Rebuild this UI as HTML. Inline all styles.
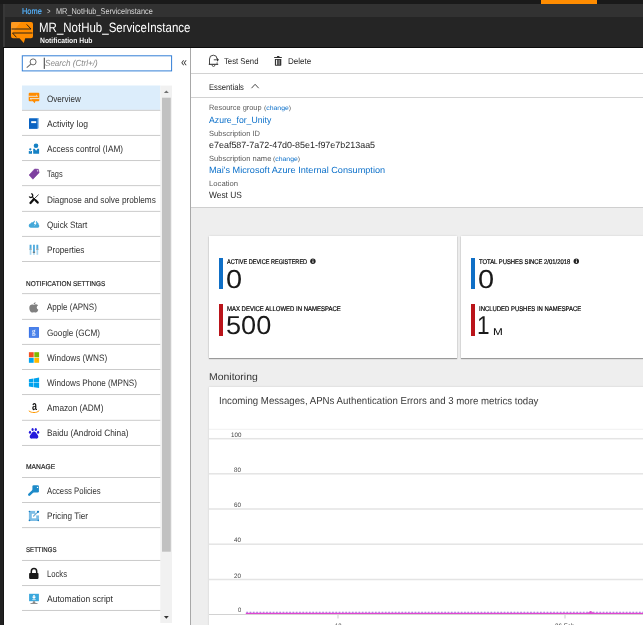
<!DOCTYPE html>
<html><head><meta charset="utf-8"><title>MR_NotHub_ServiceInstance - Notification Hub</title>
<style>
html,body{margin:0;padding:0;}
body{width:643px;height:625px;overflow:hidden;position:relative;background:#fff;font-family:"Liberation Sans",Arial,sans-serif;}
.t{position:absolute;white-space:pre;transform-origin:0 0;}
.b{position:absolute;}
.hl{position:absolute;left:22px;width:138px;height:1px;background:#d4d4d4;}
svg{position:absolute;overflow:visible;}
</style></head><body>
<!-- chrome -->
<div class="b" style="left:0;top:0;width:643px;height:4px;background:#1a1a1a"></div>
<div class="b" style="left:541px;top:0;width:56px;height:4px;background:#ff8c00"></div>
<div class="b" style="left:0;top:4px;width:643px;height:13px;background:#323232"></div>
<div class="b" style="left:0;top:17px;width:643px;height:31px;background:#252525"></div>
<div class="b" style="left:0;top:47px;width:643px;height:1px;background:#0c0c0c"></div>
<div class="b" style="left:0;top:4px;width:3px;height:621px;background:#212121"></div><div class="b" style="left:3px;top:48px;width:1px;height:577px;background:#151515"></div><div class="b" style="left:3px;top:4px;width:2px;height:43px;background:#373737"></div>
<!-- search -->
<svg width="643" height="625" style="left:0;top:0" viewBox="0 0 643 625"><rect x="22.3" y="55.8" width="149.3" height="15.1" fill="#fff" stroke="#337fd6" stroke-width="1"/><rect x="22" y="85.5" width="138.300" height="24.400" fill="#dcedfb"/><rect x="160.300" y="85.600" width="11.700" height="537.400" fill="#f1f1f1"/><rect x="162" y="97.700" width="8.800" height="454" fill="#c1c1c1"/></svg>
<!-- sidebar -->
<svg width="643" height="625" style="left:0;top:0" viewBox="0 0 643 625">
<rect x="22" y="109.84" width="138.300" height="1" fill="#cbcbcb"/>
<rect x="22" y="134.92" width="138.300" height="1" fill="#cbcbcb"/>
<rect x="22" y="160.04" width="138.300" height="1" fill="#cbcbcb"/>
<rect x="22" y="185.12" width="138.300" height="1" fill="#cbcbcb"/>
<rect x="22" y="210.88" width="138.300" height="1" fill="#cbcbcb"/>
<rect x="22" y="235.92" width="138.300" height="1" fill="#cbcbcb"/>
<rect x="22" y="261.00" width="138.300" height="1" fill="#cbcbcb"/>
<rect x="22" y="293.12" width="138.300" height="1" fill="#cbcbcb"/>
<rect x="22" y="318.88" width="138.300" height="1" fill="#cbcbcb"/>
<rect x="22" y="343.92" width="138.300" height="1" fill="#cbcbcb"/>
<rect x="22" y="369.00" width="138.300" height="1" fill="#cbcbcb"/>
<rect x="22" y="394.04" width="138.300" height="1" fill="#cbcbcb"/>
<rect x="22" y="419.80" width="138.300" height="1" fill="#cbcbcb"/>
<rect x="22" y="444.96" width="138.300" height="1" fill="#cbcbcb"/>
<rect x="22" y="477.00" width="138.300" height="1" fill="#cbcbcb"/>
<rect x="22" y="502.00" width="138.300" height="1" fill="#cbcbcb"/>
<rect x="22" y="527.12" width="138.300" height="1" fill="#cbcbcb"/>
<rect x="22" y="559.96" width="138.300" height="1" fill="#cbcbcb"/>
<rect x="22" y="585.04" width="138.300" height="1" fill="#cbcbcb"/>
<rect x="22" y="609.96" width="138.300" height="1" fill="#cbcbcb"/>
</svg>

<!-- scrollbar -->
<!-- main -->
<div class="b" style="left:190px;top:48px;width:1px;height:577px;background:#a8a8a8"></div>
<div class="b" style="left:191px;top:73px;width:452px;height:1px;background:#d2d2d2"></div>
<div class="b" style="left:191px;top:97px;width:452px;height:1px;background:#d2d2d2"></div>
<div class="b" style="left:191px;top:207px;width:452px;height:418px;background:#eeeeee;border-top:1px solid #cfcfcf"></div>
<div class="b" style="left:209px;top:236px;width:248px;height:122px;background:#fff;box-shadow:0 1px 1px rgba(0,0,0,.32),0 0 2px rgba(0,0,0,.12)"></div>
<div class="b" style="left:461px;top:236px;width:190px;height:122px;background:#fff;box-shadow:0 1px 1px rgba(0,0,0,.32),0 0 2px rgba(0,0,0,.12)"></div>
<div class="b" style="left:219px;top:258px;width:4px;height:31px;background:#0f6fc6"></div>
<div class="b" style="left:219px;top:304px;width:4px;height:32px;background:#ba141a"></div>
<div class="b" style="left:471px;top:258px;width:4px;height:31px;background:#0f6fc6"></div>
<div class="b" style="left:471px;top:304px;width:4px;height:32px;background:#ba141a"></div>
<div class="b" style="left:209px;top:387px;width:440px;height:240px;background:#fff;box-shadow:0 0 2px rgba(0,0,0,.14)"></div>
<svg width="643" height="625" style="left:0;top:0" viewBox="0 0 643 625">
<rect x="209" y="428.800" width="434" height="1" fill="#f0f0f0"/>
<rect x="209" y="437.95" width="434" height="1.500" fill="#e4e4e4"/>
<rect x="209" y="473.05" width="434" height="1.500" fill="#e4e4e4"/>
<rect x="209" y="508.25" width="434" height="1.500" fill="#e4e4e4"/>
<rect x="209" y="543.45" width="434" height="1.500" fill="#e4e4e4"/>
<rect x="209" y="578.75" width="434" height="1.500" fill="#e4e4e4"/>
<rect x="209" y="614" width="434" height="1" fill="#d2d2d2"/>
<rect x="337.500" y="615" width="1" height="3.500" fill="#ccc"/><rect x="564.500" y="615" width="1" height="3.500" fill="#ccc"/>
<path d="M245.800,613.450 H643" stroke="#e045d1" stroke-width="1.200" fill="none"/>
<path d="M246.300,612.250 H643" stroke="#9a5fd6" stroke-width=".9" stroke-dasharray="1.700 1.600" fill="none"/>
<path d="M587.500,612.700 l3.200,-1.700 l3.200,1.700 z" fill="#d840c8"/>
</svg>

<svg width="643" height="625" style="left:0;top:0" viewBox="0 0 643 625">
<!-- header hub icon -->
<path d="M13,22 h18 a2,2 0 0 1 2,2 v12.3 a2,2 0 0 1 -2,2 h-5.800 l-1.400,4.600 l-4.300,-4.600 h-6.500 a2,2 0 0 1 -2,-2 v-12.3 a2,2 0 0 1 2,-2 z" fill="#ff8c00"/>
<path d="M11,22 h10 l-10,12 z" fill="#ffa63a" opacity=".55"/>
<path d="M11.500,29 H31 L26.700,24.400" stroke="#2e2416" stroke-width="1" fill="none"/>
<path d="M32.500,33 H12.500 L16.400,37.300" stroke="#2e2416" stroke-width="1" fill="none"/>
<!-- search icon -->
<circle cx="33.1" cy="61.9" r="3" fill="none" stroke="#6a6a6a" stroke-width="1"/>
<path d="M30.9,64.1 L26.7,67.6" stroke="#6a6a6a" stroke-width="1.1"/>
<rect x="43.8" y="57.7" width="0.9" height="11.2" fill="#222"/>
<!-- overview icon -->
<path d="M29.7,92.8 h8.600 a1,1 0 0 1 1,1 v6.500 a1,1 0 0 1 -1,1 h-2.800 l-.900,2 l-1.700,-2 h-3.200 a1,1 0 0 1 -1,-1 v-6.500 a1,1 0 0 1 1,-1 z" fill="#ff8c00"/>
<path d="M28.500,96.300 H37.500 L36.200,95" stroke="#e9f3fc" stroke-width=".85" fill="none"/>
<path d="M39.500,98.600 H30.100 L31.500,99.800" stroke="#e9f3fc" stroke-width=".85" fill="none"/>
<!-- activity log -->
<path d="M29,118.6 l1.2,-.6 h8.5 v10.2 l-1.2,.6 h-8.5 z" fill="#6aa7e0"/>
<rect x="29" y="118.6" width="8.4" height="10.2" fill="#0a63c2"/>
<rect x="31.2" y="121.2" width="5" height="1.9" fill="#fff"/>
<!-- access control -->
<circle cx="36" cy="145.7" r="2.3" fill="#1581c4"/>
<path d="M33.2,148.8 h1.5 l1.4,2 l1.4,-2 h1.6 v5 h-5.9 z" fill="#1581c4"/>
<circle cx="30.3" cy="149.3" r="1.15" fill="#1581c4"/>
<path d="M28.8,150.9 h0.9 l0.6,.9 l.6,-.9 h1.1 v2.9 h-3.2 z" fill="#1581c4"/>
<!-- tags -->
<path d="M29.1,175 L34.6,169 L38.4,169.3 L39.1,172.7 L32.9,179.2 z" fill="#7d3f9f" stroke="#7d3f9f" stroke-width=".6" stroke-linejoin="round"/>
<circle cx="37.5" cy="170.8" r=".65" fill="#fff"/>
<!-- diagnose -->
<path d="M31.230,193.730 A1.900,1.900 0 1 1 29.250,196.550" stroke="#111" stroke-width="1.300" fill="none"/>
<path d="M32.500,197.100 L35.600,200.300" stroke="#111" stroke-width="1.100"/>
<path d="M35.500,200.200 L37.700,202.600" stroke="#111" stroke-width="2.200" stroke-linecap="round"/>
<path d="M38.600,194.600 L34.200,198.800" stroke="#111" stroke-width=".8"/>
<path d="M33.800,199.200 L30.500,203" stroke="#111" stroke-width="2.300" stroke-linecap="round"/>
<!-- quick start -->
<path d="M30.800,227.700 C28.200,227.700 28.200,224 30.500,223.600 C31,222.400 32.200,222 33,222.300 C33.400,221.200 34.600,220.400 36,220.800 C37,221.300 37.200,222 37.300,222.600 C38.300,222.800 38.700,223.600 38.500,224.400 C39.700,225 39.600,227.700 37.600,227.700 Z" fill="#44a8d9"/>
<path d="M35.300,220 L36.700,220 L35.700,222.800 L36.800,222.800 L34.300,226.300 L35,224 L33.900,224 Z" fill="#fff"/>
<!-- properties -->
<rect x="29.700" y="244.800" width="1.700" height="10" fill="#a8d6ef"/><rect x="29.700" y="244.800" width="1.700" height="4" fill="#4ea9dc"/><rect x="29.400" y="248.700" width="2.300" height="1.200" fill="#9aa7ad"/>
<rect x="33.100" y="244.800" width="1.700" height="10" fill="#a8d6ef"/><rect x="33.100" y="244.800" width="1.700" height="7.200" fill="#4ea9dc"/><rect x="32.800" y="251.700" width="2.300" height="1.200" fill="#6a787f"/>
<rect x="36.500" y="244.800" width="1.700" height="10" fill="#a8d6ef"/><rect x="36.500" y="244.800" width="1.700" height="4" fill="#4ea9dc"/><rect x="36.200" y="248.700" width="2.300" height="1.200" fill="#9aa7ad"/>
<!-- apple -->
<path d="M33.6,305 c-1.2,-.9 -4.3,-.6 -4.3,2.9 c0,2.3 1.5,4.7 2.8,4.7 c.7,0 1,-.4 1.8,-.4 c.8,0 1,.4 1.8,.4 c1.100,0 2.200,-1.700 2.600,-2.900 c-2,-.8 -2.100,-3.500 -.2,-4.400 c-1,-1.300 -3,-1.400 -4.500,-.3 z" fill="#808080"/>
<path d="M33.500,304.400 c0,-1.200 1,-2.100 2.100,-2.200 c.1,1.200 -.9,2.200 -2.100,2.200 z" fill="#808080"/>
<!-- google -->
<rect x="28.900" y="327.100" width="10" height="10.700" fill="#356fe6"/><rect x="29.700" y="327.900" width="8.400" height="9.100" fill="#4a82ea"/>
<!-- windows -->
<rect x="28.900" y="352.200" width="4.800" height="5.100" fill="#f25022"/><rect x="34.300" y="352.200" width="4.800" height="5.100" fill="#7fba00"/>
<rect x="28.900" y="357.900" width="4.800" height="4.900" fill="#00a4ef"/><rect x="34.300" y="357.900" width="4.800" height="4.900" fill="#ffb900"/>
<!-- windows phone -->
<path d="M28.900,379.200 L33.500,378.500 V382.600 H28.900 z M34,378.400 L39.100,377.600 V382.600 H34 z M28.900,383.100 H33.500 V387.200 L28.900,386.500 z M34,383.100 H39.100 V388.100 L34,387.300 z" fill="#00a2ed"/>
<!-- amazon smile -->
<path d="M28.800,410.800 C30.500,412.200 32,412.500 34,412.500 C36,412.500 37.500,412.200 39.200,410.600" stroke="#ff9900" stroke-width="1" fill="none"/>
<!-- baidu -->
<path d="M34,431.600 c1.300,0 2,1 2.700,2.100 c.8,1.200 1.800,2 1.600,3.400 c-.2,1.300 -1.500,1.800 -2.700,1.500 c-.9,-.3 -2.300,-.3 -3.200,0 c-1.200,.3 -2.500,-.2 -2.700,-1.500 c-.2,-1.400 .8,-2.200 1.600,-3.400 c.7,-1.100 1.400,-2.100 2.700,-2.100 z" fill="#2319dc"/>
<ellipse cx="30" cy="432.200" rx="1.100" ry="1.500" fill="#2319dc"/><ellipse cx="32.600" cy="429.500" rx="1.100" ry="1.600" fill="#2319dc"/>
<ellipse cx="35.800" cy="429.500" rx="1.100" ry="1.600" fill="#2319dc"/><ellipse cx="38.100" cy="432.300" rx="1.100" ry="1.500" fill="#2319dc"/>
<!-- key -->
<rect x="32.400" y="485.300" width="6.500" height="7.300" rx="1.300" fill="#1e8bc9"/>
<path d="M33.500,490.600 L29.300,494.600" stroke="#1e8bc9" stroke-width="2.600" stroke-linecap="round"/>
<circle cx="37.500" cy="487.400" r=".7" fill="#fff"/>
<!-- pricing tier -->
<rect x="28.900" y="510.900" width="10.100" height="10.100" fill="#7dbde5"/>
<rect x="31.800" y="513.800" width="4.400" height="4.500" fill="#fff"/>
<rect x="35.200" y="510.500" width="4.200" height="4.900" fill="#fff"/>
<circle cx="29.500" cy="511.500" r=".8" fill="#1a7fc1"/><circle cx="29.500" cy="520.400" r=".8" fill="#1a7fc1"/><circle cx="38.300" cy="520.400" r=".8" fill="#1a7fc1"/>
<circle cx="38" cy="511.800" r="1.150" fill="#1a7fc1"/>
<path d="M33.400,516.300 L38,511.800" stroke="#1a7fc1" stroke-width="1.100" stroke-dasharray="1 .35"/>
<!-- lock -->
<rect x="29.100" y="573" width="9.400" height="5.900" rx=".8" fill="#1a1a1a"/>
<path d="M31.300,573.500 v-2 a2.700,2.900 0 0 1 5.400,0 v2" stroke="#1a1a1a" stroke-width="1.500" fill="none"/>
<!-- automation -->
<rect x="29.100" y="593.800" width="9.800" height="7.400" fill="#3aa7dc"/>
<path d="M33.300,595 h1.400 v1.800 h1.500 l-2.200,2.300 l-2.200,-2.300 h1.500 z" fill="#fff"/>
<rect x="32.300" y="599.400" width="3.400" height=".7" fill="#fff"/>
<path d="M33,601.200 h2 l.5,2 h-3 z" fill="#8a8a8a"/><rect x="30.500" y="603" width="7" height=".8" fill="#7a7a7a"/>
<!-- bell (test send) -->
<path d="M209.500,64.300 V59 a3.800,3.800 0 0 1 7.600,0" stroke="#333" stroke-width=".9" fill="none"/>
<path d="M217.100,62.200 V64.300" stroke="#555" stroke-width=".8" fill="none"/>
<path d="M208.800,64.300 H218.200" stroke="#222" stroke-width="1"/>
<path d="M212.100,64.900 a1.400,1.600 0 0 0 2.800,0" stroke="#333" stroke-width=".8" fill="none"/>
<path d="M213.800,59.800 H217.500" stroke="#333" stroke-width=".9"/>
<path d="M217,57.900 L219,59.800 L217,61.700 z" fill="#333"/>
<!-- trash -->
<rect x="274.100" y="56.900" width="7.800" height="1.200" rx=".4" fill="#333"/><rect x="276.900" y="56" width="2.600" height="1.200" rx=".4" fill="#333"/>
<path d="M274.900,58.900 h6.400 v6 a.9,.9 0 0 1 -.9,.9 h-4.600 a.9,.9 0 0 1 -.9,-.9 z" fill="#333"/>
<rect x="276" y="59.800" width="1" height="5" fill="#eee"/><rect x="277.600" y="59.800" width=".9" height="5" fill="#999"/><rect x="279.100" y="59.800" width=".9" height="5" fill="#888"/>
<!-- caret -->
<path d="M251.500,88.200 L255.100,84.300 L258.700,88.200" stroke="#333" stroke-width=".9" fill="none"/>
<!-- info icons -->
<circle cx="312.900" cy="261.300" r="2.700" fill="#222"/><rect x="312.500" y="260.700" width=".9" height="2.300" fill="#fff"/><rect x="312.500" y="259.400" width=".9" height=".9" fill="#fff"/>
<circle cx="576.300" cy="261.300" r="2.700" fill="#222"/><rect x="575.900" y="260.700" width=".9" height="2.300" fill="#fff"/><rect x="575.900" y="259.400" width=".9" height=".9" fill="#fff"/>
<!-- scrollbar arrows -->
<path d="M163.900,93 l2.450,-2.600 l2.450,2.600 z" fill="#707070"/>
<path d="M163.900,616.100 l2.450,2.600 l2.450,-2.600 z" fill="#333"/>
</svg>

<div style="position:absolute;left:0;top:0;width:643px;height:625px;will-change:transform">
<span class="t" style="left:22.00px;top:7px;font-size:8.5px;line-height:8.5px;color:#55b3ff;transform:matrix(0.8716,0.0005,0,1,0,0);-webkit-text-stroke:0.2px #55b3ff;">Home</span>
<span class="t" style="left:47.00px;top:7px;font-size:8.5px;line-height:8.5px;color:#d0d0d0;transform:matrix(0.7000,0.0005,0,1,0,0);">&gt;</span>
<span class="t" style="left:56.30px;top:7px;font-size:8.5px;line-height:8.5px;color:#d8d8d8;transform:matrix(0.8642,0.0005,0,1,0,0);">MR_NotHub_ServiceInstance</span>
<span class="t" style="left:38.65px;top:21px;font-size:13.5px;line-height:13.5px;color:#ffffff;transform:matrix(0.8518,0.0005,0,1,0,0);">MR_NotHub_ServiceInstance</span>
<span class="t" style="left:39.50px;top:37px;font-size:7.5px;line-height:7.5px;color:#f4f4f4;font-weight:bold;transform:matrix(0.9069,0.0005,0,1,0,0);">Notification Hub</span>
<span class="t" style="left:45.30px;top:59px;font-size:8.8px;line-height:8.8px;color:#8a8a8a;font-style:italic;transform:matrix(0.9164,0.0005,0,1,0,0);">Search (Ctrl+/)</span>
<span class="t" style="left:180.80px;top:56px;font-size:12.5px;line-height:12.5px;color:#3a3a3a;transform:matrix(0.8571,0.0005,0,1,0,0);">«</span>
<span class="t" style="left:46.50px;top:95px;font-size:9.3px;line-height:9.3px;color:#303030;transform:matrix(0.8711,0.0005,0,1,0,0);">Overview</span>
<span class="t" style="left:46.50px;top:120px;font-size:9.3px;line-height:9.3px;color:#303030;transform:matrix(0.9218,0.0005,0,1,0,0);">Activity log</span>
<span class="t" style="left:46.50px;top:145px;font-size:9.3px;line-height:9.3px;color:#303030;transform:matrix(0.8861,0.0005,0,1,0,0);">Access control (IAM)</span>
<span class="t" style="left:46.50px;top:170px;font-size:9.3px;line-height:9.3px;color:#303030;transform:matrix(0.7954,0.0005,0,1,0,0);">Tags</span>
<span class="t" style="left:46.50px;top:196px;font-size:9.3px;line-height:9.3px;color:#303030;transform:matrix(0.8890,0.0005,0,1,0,0);">Diagnose and solve problems</span>
<span class="t" style="left:46.50px;top:221px;font-size:9.3px;line-height:9.3px;color:#303030;transform:matrix(0.8729,0.0005,0,1,0,0);">Quick Start</span>
<span class="t" style="left:46.50px;top:246px;font-size:9.3px;line-height:9.3px;color:#303030;transform:matrix(0.8824,0.0005,0,1,0,0);">Properties</span>
<span class="t" style="left:46.50px;top:303px;font-size:9.3px;line-height:9.3px;color:#303030;transform:matrix(0.8620,0.0005,0,1,0,0);">Apple (APNS)</span>
<span class="t" style="left:46.50px;top:329px;font-size:9.3px;line-height:9.3px;color:#303030;transform:matrix(0.8766,0.0005,0,1,0,0);">Google (GCM)</span>
<span class="t" style="left:46.50px;top:354px;font-size:9.3px;line-height:9.3px;color:#303030;transform:matrix(0.8827,0.0005,0,1,0,0);">Windows (WNS)</span>
<span class="t" style="left:46.50px;top:379px;font-size:9.3px;line-height:9.3px;color:#303030;transform:matrix(0.8752,0.0005,0,1,0,0);">Windows Phone (MPNS)</span>
<span class="t" style="left:46.50px;top:404px;font-size:9.3px;line-height:9.3px;color:#303030;transform:matrix(0.8874,0.0005,0,1,0,0);">Amazon (ADM)</span>
<span class="t" style="left:46.50px;top:429px;font-size:9.3px;line-height:9.3px;color:#303030;transform:matrix(0.8919,0.0005,0,1,0,0);">Baidu (Android China)</span>
<span class="t" style="left:46.50px;top:487px;font-size:9.3px;line-height:9.3px;color:#303030;transform:matrix(0.8301,0.0005,0,1,0,0);">Access Policies</span>
<span class="t" style="left:46.50px;top:512px;font-size:9.3px;line-height:9.3px;color:#303030;transform:matrix(0.8825,0.0005,0,1,0,0);">Pricing Tier</span>
<span class="t" style="left:46.50px;top:570px;font-size:9.3px;line-height:9.3px;color:#303030;transform:matrix(0.8239,0.0005,0,1,0,0);">Locks</span>
<span class="t" style="left:46.50px;top:595px;font-size:9.3px;line-height:9.3px;color:#303030;transform:matrix(0.9178,0.0005,0,1,0,0);">Automation script</span>
<span class="t" style="left:25.50px;top:280px;font-size:7px;line-height:7px;color:#151515;transform:matrix(0.9240,0.0005,0,1,0,0);-webkit-text-stroke:0.15px #151515;">NOTIFICATION SETTINGS</span>
<span class="t" style="left:25.50px;top:463px;font-size:7px;line-height:7px;color:#151515;transform:matrix(0.9619,0.0005,0,1,0,0);-webkit-text-stroke:0.15px #151515;">MANAGE</span>
<span class="t" style="left:25.50px;top:546px;font-size:7px;line-height:7px;color:#151515;transform:matrix(0.8717,0.0005,0,1,0,0);-webkit-text-stroke:0.15px #151515;">SETTINGS</span>
<span class="t" style="left:223.70px;top:57px;font-size:8.5px;line-height:8.5px;color:#252525;transform:matrix(0.9114,0.0005,0,1,0,0);">Test Send</span>
<span class="t" style="left:287.90px;top:57px;font-size:8.5px;line-height:8.5px;color:#252525;transform:matrix(0.9459,0.0005,0,1,0,0);">Delete</span>
<span class="t" style="left:209.10px;top:83px;font-size:8.5px;line-height:8.5px;color:#252525;transform:matrix(0.9015,0.0005,0,1,0,0);">Essentials</span>
<span class="t" style="left:209.10px;top:104px;font-size:7.6px;line-height:7.6px;color:#5a5a5a;transform:matrix(0.9720,0.0005,0,1,0,0);">Resource group</span>
<span class="t" style="left:263.60px;top:105px;font-size:6.4px;line-height:6.4px;color:#5a5a5a;transform:matrix(1.0720,0.0005,0,1,0,0);">(<span style="color:#0a6fc9">change</span>)</span>
<span class="t" style="left:209.10px;top:116px;font-size:9px;line-height:9px;color:#0a6fc9;transform:matrix(0.9642,0.0005,0,1,0,0);">Azure_for_Unity</span>
<span class="t" style="left:209.10px;top:130px;font-size:7.6px;line-height:7.6px;color:#5a5a5a;transform:matrix(0.9902,0.0005,0,1,0,0);">Subscription ID</span>
<span class="t" style="left:209.10px;top:141px;font-size:9px;line-height:9px;color:#252525;transform:matrix(0.9937,0.0005,0,1,0,0);">e7eaf587-7a72-47d0-85e1-f97e7b213aa5</span>
<span class="t" style="left:209.10px;top:155px;font-size:7.6px;line-height:7.6px;color:#5a5a5a;transform:matrix(0.9909,0.0005,0,1,0,0);">Subscription name</span>
<span class="t" style="left:273.30px;top:156px;font-size:6.4px;line-height:6.4px;color:#5a5a5a;transform:matrix(1.0720,0.0005,0,1,0,0);">(<span style="color:#0a6fc9">change</span>)</span>
<span class="t" style="left:209.10px;top:166px;font-size:9px;line-height:9px;color:#0a6fc9;transform:matrix(1.0162,0.0005,0,1,0,0);">Mai&#x27;s Microsoft Azure Internal Consumption</span>
<span class="t" style="left:209.10px;top:180px;font-size:7.6px;line-height:7.6px;color:#5a5a5a;transform:matrix(1.0110,0.0005,0,1,0,0);">Location</span>
<span class="t" style="left:209.10px;top:191px;font-size:9px;line-height:9px;color:#252525;transform:matrix(0.9310,0.0005,0,1,0,0);">West US</span>
<span class="t" style="left:226.80px;top:259px;font-size:6.8px;line-height:6.8px;color:#000;transform:matrix(0.8191,0.0005,0,1,0,0);-webkit-text-stroke:0.2px #000;">ACTIVE DEVICE REGISTERED</span>
<span class="t" style="left:225.88px;top:266px;font-size:26px;line-height:26px;color:#1a1a1a;transform:matrix(1.1154,0.0005,0,1,0,0);">0</span>
<span class="t" style="left:226.80px;top:306px;font-size:6.8px;line-height:6.8px;color:#000;transform:matrix(0.8790,0.0005,0,1,0,0);-webkit-text-stroke:0.2px #000;">MAX DEVICE ALLOWED IN NAMESPACE</span>
<span class="t" style="left:225.96px;top:312px;font-size:26px;line-height:26px;color:#1a1a1a;transform:matrix(1.0448,0.0005,0,1,0,0);">500</span>
<span class="t" style="left:478.60px;top:259px;font-size:6.8px;line-height:6.8px;color:#000;transform:matrix(0.8632,0.0005,0,1,0,0);-webkit-text-stroke:0.2px #000;">TOTAL PUSHES SINCE 2/01/2018</span>
<span class="t" style="left:477.88px;top:266px;font-size:26px;line-height:26px;color:#1a1a1a;transform:matrix(1.1154,0.0005,0,1,0,0);">0</span>
<span class="t" style="left:478.60px;top:306px;font-size:6.8px;line-height:6.8px;color:#000;transform:matrix(0.8718,0.0005,0,1,0,0);-webkit-text-stroke:0.2px #000;">INCLUDED PUSHES IN NAMESPACE</span>
<span class="t" style="left:477.33px;top:312px;font-size:26px;line-height:26px;color:#1a1a1a;transform:matrix(0.8692,0.0005,0,1,0,0);">1</span>
<span class="t" style="left:492.80px;top:327px;font-size:10px;line-height:10px;color:#000;transform:matrix(1.1750,0.0005,0,1,0,0);">M</span>
<span class="t" style="left:208.80px;top:372px;font-size:10px;line-height:10px;color:#333;transform:matrix(1.0449,0.0005,0,1,0,0);">Monitoring</span>
<span class="t" style="left:218.90px;top:396px;font-size:10.2px;line-height:10.2px;color:#3a3a3a;transform:matrix(0.9480,0.0005,0,1,0,0);">Incoming Messages, APNs Authentication Errors and 3 more metrics today</span>
<span class="t" style="left:230.80px;top:432px;font-size:6.5px;line-height:6.5px;color:#444;transform:matrix(0.9528,0.0005,0,1,0,0);">100</span>
<span class="t" style="left:234.20px;top:467px;font-size:6.5px;line-height:6.5px;color:#444;transform:matrix(0.9586,0.0005,0,1,0,0);">80</span>
<span class="t" style="left:234.20px;top:502px;font-size:6.5px;line-height:6.5px;color:#444;transform:matrix(0.9586,0.0005,0,1,0,0);">60</span>
<span class="t" style="left:234.20px;top:537px;font-size:6.5px;line-height:6.5px;color:#444;transform:matrix(0.9586,0.0005,0,1,0,0);">40</span>
<span class="t" style="left:234.20px;top:573px;font-size:6.5px;line-height:6.5px;color:#444;transform:matrix(0.9586,0.0005,0,1,0,0);">20</span>
<span class="t" style="left:237.90px;top:607px;font-size:6.5px;line-height:6.5px;color:#444;transform:matrix(0.9000,0.0005,0,1,0,0);">0</span>
<span class="t" style="left:334.50px;top:623px;font-size:6.5px;line-height:6.5px;color:#444;transform:matrix(0.9192,0.0005,0,1,0,0);">12</span>
<span class="t" style="left:555.00px;top:623px;font-size:6.5px;line-height:6.5px;color:#444;transform:matrix(0.9699,0.0005,0,1,0,0);">26 Feb</span>
<span class="t" style="left:31.90px;top:327px;font-size:8.7px;line-height:8.7px;color:rgba(255,255,255,.85);font-weight:bold;font-family:&quot;Liberation Serif&quot;,serif;transform:matrix(0.8200,0.0005,0,1,0,0);">g</span>
<span class="t" style="left:31.50px;top:400px;font-size:12.9px;line-height:12.9px;color:#111;font-weight:bold;transform:matrix(0.6875,0.0005,0,1,0,0);">a</span>
</div>
</body></html>
